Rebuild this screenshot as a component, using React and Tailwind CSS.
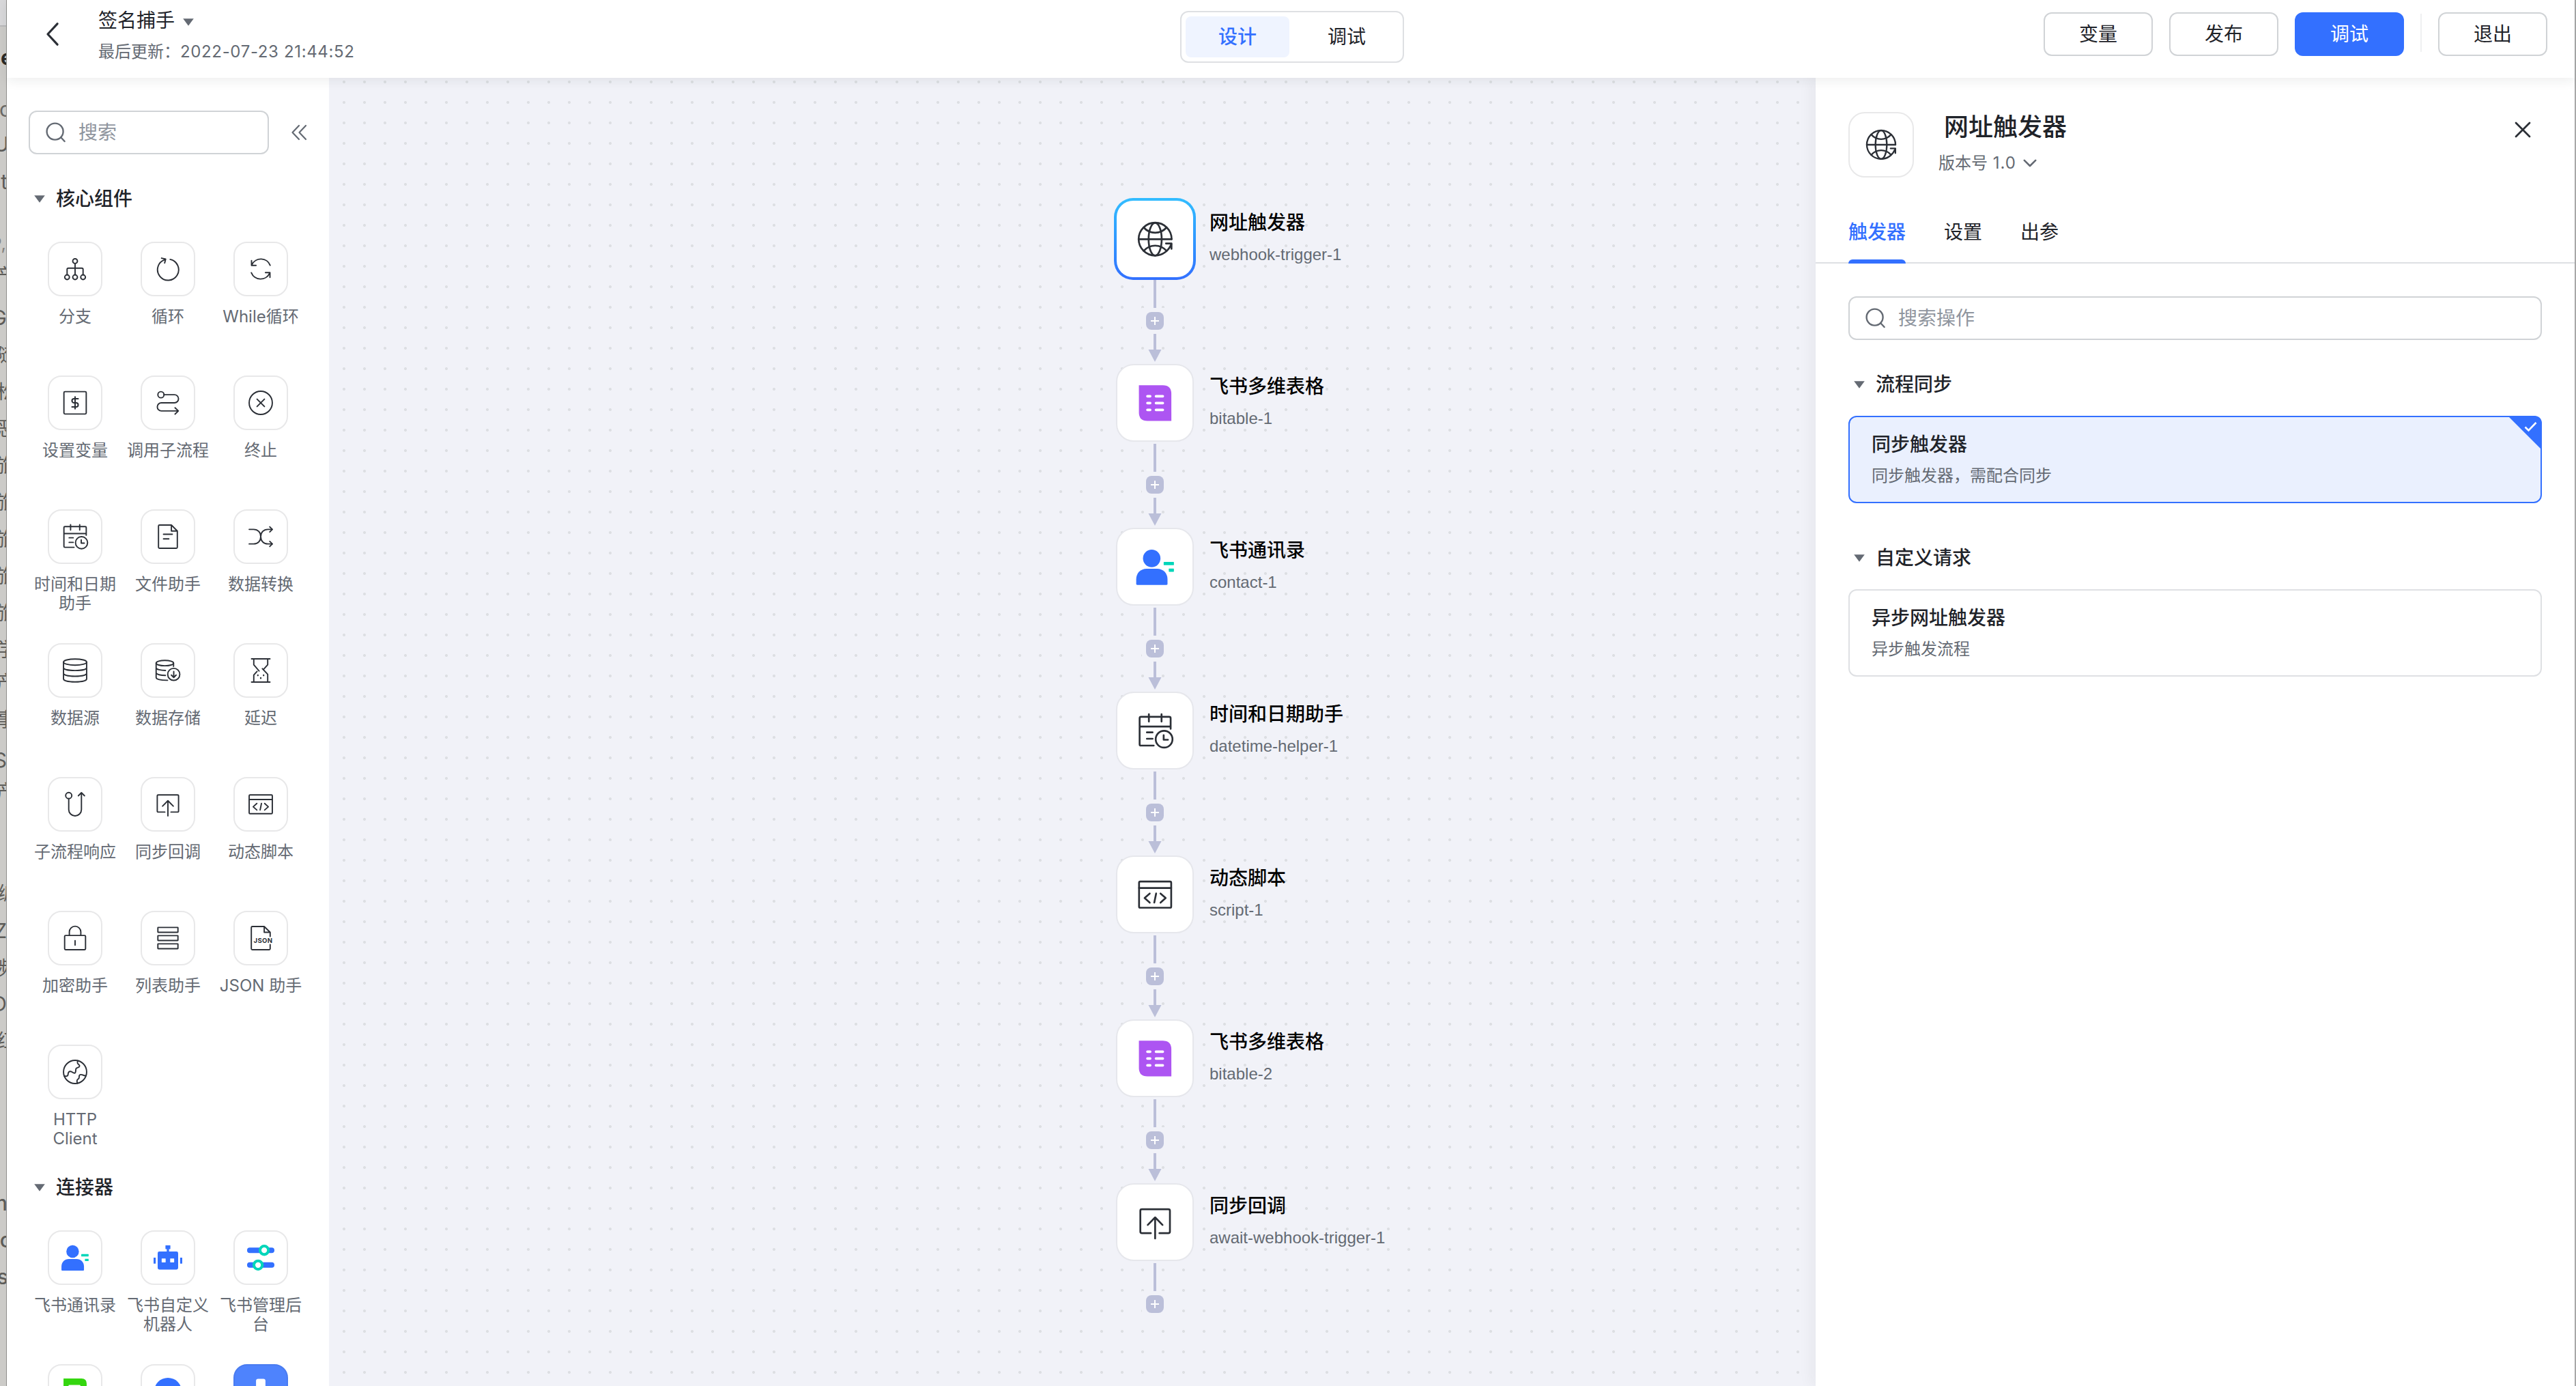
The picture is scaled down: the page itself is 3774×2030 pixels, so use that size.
import React from "react";

const INK = "#2b2f36";

/* Every glyph is drawn around the origin in a 32-unit box. */
function Icon({ size, children }) {
  return (
    <svg
      width={size}
      height={size}
      viewBox="-16 -16 32 32"
      fill="none"
      stroke={INK}
      strokeWidth="1.28"
      strokeLinecap="round"
      strokeLinejoin="round"
      className="block shrink-0"
    >
      {children}
    </svg>
  );
}

const glyphs = {
  branch: (
    <>
      <circle cx="0" cy="-7.7" r="2.3" />
      <circle cx="-7.8" cy="8" r="2.3" />
      <circle cx="0" cy="8" r="2.3" />
      <circle cx="7.8" cy="8" r="2.3" />
      <path d="M0 -5.4V5.7M-7.8 5.7V0.4Q-7.8 -0.8 -6.6 -0.8H6.6Q7.8 -0.8 7.8 0.4V5.7" />
    </>
  ),
  loop: (
    <>
      <path d="M2.2 -9.4A10.3 10.3 0 1 1 -3 -9.1" />
      <path d="M-6.2 -10.6L-2.2 -9.7L-3.2 -5.9" />
    </>
  ),
  whileLoop: (
    <>
      <path d="M-8.6 -4.2A9.7 9.7 0 0 1 9.2 -3.6M-9 -8.2V-3.5H-4.6" />
      <path d="M8.6 4.2A9.7 9.7 0 0 1 -9.2 3.6M9 8.2V3.5H4.6" />
    </>
  ),
  variable: (
    <>
      <rect x="-10.9" y="-10.9" width="21.8" height="21.8" rx="1" />
      <path d="M3 -4H-1A2 2 0 0 0 -1 0H1A2 2 0 0 1 1 4H-3M0 -5.8V5.8" strokeWidth="1.4" />
    </>
  ),
  subflow: (
    <>
      <circle cx="-6.8" cy="-7.9" r="3" />
      <path d="M-3.8 -7.9H6.4A3.95 3.95 0 0 1 6.4 0H-6.4A3.95 3.95 0 0 0 -6.4 7.9H10.2M7 4.8L10.2 7.9L7 11" />
    </>
  ),
  terminate: (
    <>
      <circle cx="0" cy="0" r="11.3" />
      <path d="M-3.6 -3.6L3.6 3.6M3.6 -3.6L-3.6 3.6" />
    </>
  ),
  calendar: (
    <>
      <path d="M10.9 -1.4V-8.8Q10.9 -9.8 9.9 -9.8H-9.9Q-10.9 -9.8 -10.9 -8.8V9.5Q-10.9 10.4 -9.9 10.4H-1M-10.9 -3H10.9" />
      <path d="M-4.4 -11.7V-6.5M4.5 -11.7V-6.5M-5.8 1.1H-1.8M-5.8 5.6H-1.8" />
      <circle cx="6.3" cy="5.9" r="5.9" />
      <path d="M6 3.1V6.3H9" />
    </>
  ),
  file: (
    <>
      <path d="M3.4 -11.3H-8.2Q-9.2 -11.3 -9.2 -10.3V10.3Q-9.2 11.3 -8.2 11.3H8.2Q9.2 11.3 9.2 10.3V-5.5L3.4 -11.3V-5.5H9.2" />
      <path d="M-4.3 -2.3H4.3M-4.3 2.2H0.9" />
    </>
  ),
  shuffle: (
    <>
      <path d="M-11.3 -7.1H-7C-2.6 -7.1 0 -4 0 0S2.6 7.1 7 7.1H11.2" />
      <path d="M-11.3 7.1H-7C-2.6 7.1 0 4 0 0S2.6 -7.1 7 -7.1H11.2" />
      <path d="M8.8 -9.6L11.3 -7.1L8.8 -4.6M8.8 4.6L11.3 7.1L8.8 9.6" />
    </>
  ),
  database: (
    <>
      <ellipse cx="0" cy="-8.2" rx="11.3" ry="3" />
      <path d="M-11.3 -8.2V8.2C-11.3 12.2 11.3 12.2 11.3 8.2V-8.2M-11.3 -2.9C-11.3 1.1 11.3 1.1 11.3 -2.9M-11.3 2.7C-11.3 6.7 11.3 6.7 11.3 2.7" />
    </>
  ),
  dataStore: (
    <>
      <ellipse cx="-3" cy="-7.2" rx="8.5" ry="2.6" />
      <path d="M-11.5 -7.2V6.8C-11.5 8.6 -7 9.7 -0.4 9.6M5.5 -7.2V-4M-11.5 -2.7C-11.5 -1 -7 0 -2.4 0M-11.5 2.2C-11.5 3.9 -7 4.8 -2.4 4.8" />
      <circle cx="5.7" cy="3.8" r="5.9" />
      <path d="M5.7 1V6.6M3.4 4.5L5.7 6.8L8 4.5" />
    </>
  ),
  hourglass: (
    <>
      <path d="M-9 -11.3H9M-9 11.3H9M-6.8 -11.3V-5.6L-1.6 0.5M-3.6 0.9L-6.8 4.4V11.3M6.8 -11.3V-5.6L3.2 -1.6M1.6 -1.8L6.8 3.8V11.3" />
      <path d="M-2.8 4.6V4.9M2.8 4.6V4.9M0 7.3V7.6" strokeWidth="1.5" />
    </>
  ),
  response: (
    <>
      <circle cx="-6.2" cy="-8.5" r="3" />
      <path d="M-6.2 -5.5V5.1A6.2 6.2 0 0 0 6.2 5.1V-11.2M3.2 -8.3L6.2 -11.3L9.2 -8.3" />
    </>
  ),
  callback: (
    <>
      <path d="M-3 7.6H-9.3Q-10.4 7.6 -10.4 6.6V-8.2Q-10.4 -9.2 -9.3 -9.2H9.3Q10.4 -9.2 10.4 -8.2V6.6Q10.4 7.6 9.3 7.6H3" />
      <path d="M0 11.3V-3.4M-5.2 1.8L0 -3.5L5.2 1.8" />
    </>
  ),
  script: (
    <>
      <rect x="-11.3" y="-9.2" width="22.6" height="18.4" rx="0.9" />
      <path d="M-11.3 -4.7H11.3M-3.8 -0.8L-7.4 2.4L-3.8 5.6M3.8 -0.8L7.4 2.4L3.8 5.6M0.7 -0.8L-0.6 5.6" />
    </>
  ),
  lock: (
    <>
      <rect x="-10.2" y="-2.6" width="20.4" height="13.9" rx="0.9" />
      <path d="M-5.6 -2.6V-6A5.6 5.6 0 0 1 5.6 -6V-2.6M0 2.4V6.8" />
    </>
  ),
  list: (
    <>
      <rect x="-9.8" y="-10.4" width="19.6" height="4.7" rx="0.3" />
      <rect x="-9.8" y="-2.4" width="19.6" height="4.7" rx="0.3" />
      <rect x="-9.8" y="5.6" width="19.6" height="4.7" rx="0.3" />
    </>
  ),
  json: (
    <>
      <path d="M9.2 -1.6V-5.7L3.4 -11.3H-8.2Q-9.2 -11.3 -9.2 -10.3V10.3Q-9.2 11.3 -8.2 11.3H8.2Q9.2 11.3 9.2 10.3V6.3M3.4 -11.3V-5.7H9.2" />
      <text
        x="-7"
        y="4.7"
        fontSize="6.4"
        fontWeight="700"
        fontFamily="Inter, 'Liberation Sans', sans-serif"
        textLength="18.4"
        fill={INK}
        stroke="none"
      >
        JSON
      </text>
    </>
  ),
  http: (
    <>
      <circle cx="0" cy="0" r="11.3" />
      <path d="M-10.5 4C-8.5 4.3 -7 4.3 -6.9 2.6C-6.8 0.5 -6.2 -0.6 -4.4 -0.5C-2.8 -0.3 -2 1.4 -0.4 1.2C1.2 0.9 0.2 -1.8 1 -3.3C1.8 -4.6 4.3 -4 4.4 -5.8C4.4 -7.3 2.8 -7.3 2.4 -8.7C2.2 -9.6 2.4 -10.4 2.8 -10.9" />
      <path d="M-3.6 10.7C-4.4 9.2 -4 8 -2.8 7.3" stroke="none" />
      <path d="M2.4 11C1.5 9.4 1.6 7.6 3.2 6.8C4.6 6 3.4 4.4 4.4 3.1C5.4 2 6.8 2.7 7.8 3.1C8.8 3.6 9.6 3.8 10.5 3.6" />
    </>
  ),
  webhook: (
    <>
      <path d="M11.6 0A11.6 11.6 0 1 0 -11.6 0A11.6 11.6 0 0 0 0 11.5C5.6 11.5 9.6 7.8 11.4 3.4" />
      <path d="M-11.6 0H11.6M7.6 3H11.5V6.8M-8 -8.2C-3.6 -3.3 3.6 -3.3 8 -8.2M-8 8.2C-3.6 3.3 3.6 3.3 8 8.2" />
      <ellipse cx="0" cy="0" rx="4.6" ry="11.5" />
    </>
  ),
  contact: (
    <g stroke="none">
      <circle cx="-2.4" cy="-6" r="6.15" fill="#3370ff" />
      <path
        d="M-13.3 8.6C-13.3 4.4 -10.2 1.3 -6 1.3H1.4C5.6 1.3 8.7 4.4 8.7 8.6V12Q8.7 12.7 8 12.7H-12.6Q-13.3 12.7 -13.3 12Z"
        fill="#3370ff"
      />
      <rect x="6" y="-3.5" width="7.2" height="2.3" rx="0.3" fill="#00d6b9" />
      <rect x="9.6" y="1.1" width="3.6" height="2.3" rx="0.3" fill="#00d6b9" />
    </g>
  ),
  robot: (
    <g stroke="none" fill="#3370ff">
      <rect x="-2.4" y="-12" width="4.8" height="3.6" rx="0.3" />
      <rect x="-1.1" y="-8.6" width="2.2" height="3" />
      <rect x="-10" y="-6" width="20" height="17.6" rx="1.6" />
      <rect x="-14" y="0" width="2.1" height="5.8" rx="0.2" />
      <rect x="11.9" y="0" width="2.1" height="5.8" rx="0.2" />
      <rect x="-6.1" y="0.8" width="3.9" height="3.9" rx="0.3" fill="#fff" />
      <rect x="2.2" y="0.8" width="3.9" height="3.9" rx="0.3" fill="#fff" />
    </g>
  ),
  sliders: (
    <>
      <path d="M-10.7 -7.2H10.7M-10.7 7.2H10.7" stroke="#3370ff" strokeWidth="5.3" />
      <circle cx="3.4" cy="-7.2" r="4.1" fill="#fff" stroke="#00d6b9" strokeWidth="2.7" />
      <circle cx="-2.6" cy="7.2" r="4.1" fill="#fff" stroke="#00d6b9" strokeWidth="2.7" />
    </>
  ),
  bitable: (
    <>
      <path d="M-11.4 -12.5H5.4Q11.4 -12.5 11.4 -6.5V12.5H-5.4Q-11.4 12.5 -11.4 6.5Z" fill="#ad55f2" stroke="none" />
      <path d="M-5.4 -4.8H-3.5M0.6 -4.8H5.4M-5.4 0H-3.5M0.6 0H5.4M-5.4 4.8H-3.5M0.6 4.8H5.4" stroke="#fff" strokeWidth="1.8" />
    </>
  ),
  sheet: (
    <g stroke="none">
      <path d="M-11.3 -12.6H6.3Q11.3 -12.6 11.3 -7.6V12.6H-6Q-11.3 12.6 -11.3 7Z" fill="#34d60f" />
      <rect x="-6.4" y="-6.3" width="11.6" height="12.6" rx="0.6" fill="#fff" />
    </g>
  ),
  round: <circle cx="0" cy="0" r="13.4" fill="#3370ff" stroke="none" />,
  solid: <rect x="-4.6" y="-12.4" width="9.2" height="24" rx="2" fill="#fff" stroke="none" />,
};

function Caret({ className = "" }) {
  return (
    <svg width="16" height="11" viewBox="0 0 16 11" className={`block shrink-0 ${className}`}>
      <path d="M0.2 0.2H15.8L8 10.8Z" fill="#646a73" />
    </svg>
  );
}

function SearchIcon() {
  return (
    <svg width="30" height="30" viewBox="0 0 30 30" fill="none" stroke="#646a73" strokeWidth="2.4" strokeLinecap="round" className="block shrink-0">
      <circle cx="13.6" cy="13.6" r="12" />
      <path d="M22.5 22.5L27.6 28" />
    </svg>
  );
}

const core = [
  ["branch", "分支"],
  ["loop", "循环"],
  ["whileLoop", "While循环"],
  ["variable", "设置变量"],
  ["subflow", "调用子流程"],
  ["terminate", "终止"],
  ["calendar", "时间和日期助手"],
  ["file", "文件助手"],
  ["shuffle", "数据转换"],
  ["database", "数据源"],
  ["dataStore", "数据存储"],
  ["hourglass", "延迟"],
  ["response", "子流程响应"],
  ["callback", "同步回调"],
  ["script", "动态脚本"],
  ["lock", "加密助手"],
  ["list", "列表助手"],
  ["json", "JSON 助手"],
  ["http", "HTTP Client"],
];

const connectors = [
  ["contact", "飞书通讯录"],
  ["robot", "飞书自定义机器人"],
  ["sliders", "飞书管理后台"],
  ["sheet", ""],
  ["round", ""],
  ["solid", ""],
];

function Tile({ icon, label }) {
  const filled = icon === "solid";
  return (
    <div className="flex h-[196px] w-[136px] flex-col items-center">
      <div
        className={
          filled
            ? "flex size-20 shrink-0 items-center justify-center rounded-[20px] border-2 border-[#4a7cf0] bg-[#4e83fd]"
            : "flex size-20 shrink-0 items-center justify-center rounded-[20px] border-2 border-[#e8e8e9] bg-white"
        }
      >
        <Icon size={48}>{glyphs[icon]}</Icon>
      </div>
      <div className="mt-4 w-[124px] text-center text-[24px] leading-7 text-[#646a73]">{label}</div>
    </div>
  );
}

function Section({ title, items, className }) {
  return (
    <section className={className}>
      <div className="flex h-10 items-center gap-4 pl-10 text-[28px] font-medium leading-10 text-[#1f2329]">
        <Caret />
        {title}
      </div>
      <div className="mt-[43px] flex flex-wrap pl-8">
        {items.map(([icon, label], i) => (
          <Tile key={i} icon={icon} label={label} />
        ))}
      </div>
    </section>
  );
}

/* [centre y, text, font size, right overhang, tone] */
const behind = [
  [84, "de", 30, -10, "font-bold text-[#2a2926]"],
  [160, "o", 30, -8, "text-[#6a6966]"],
  [211, "U", 30, -4, "text-[#5d5c59]"],
  [266, "t", 30, -2, "text-[#5d5c59]"],
  [357, "P,", 26, 0, "text-[#84837f]"],
  [404, "产", 28, -12, "text-[#5d5c59]"],
  [465, "G", 30, -1, "text-[#5d5c59]"],
  [520, "随", 28, -12, "text-[#5d5c59]"],
  [574, "松", 28, -14, "text-[#5d5c59]"],
  [628, "恶", 28, -14, "text-[#5d5c59]"],
  [682, "旅", 28, -12, "text-[#5d5c59]"],
  [736, "旅", 28, -12, "text-[#5d5c59]"],
  [790, "旅", 28, -12, "text-[#5d5c59]"],
  [844, "旅", 28, -12, "text-[#5d5c59]"],
  [898, "旅", 28, -12, "text-[#5d5c59]"],
  [952, "学", 28, -14, "text-[#5d5c59]"],
  [1000, "产", 28, -14, "text-[#5d5c59]"],
  [1054, "事", 28, -14, "text-[#5d5c59]"],
  [1113, "S", 30, -1, "text-[#5d5c59]"],
  [1160, "产", 28, -14, "text-[#5d5c59]"],
  [1257, ",", 28, 8, "text-[#84837f]"],
  [1309, "编", 28, -16, "text-[#5d5c59]"],
  [1363, "Z", 30, -1, "text-[#5d5c59]"],
  [1418, "频", 28, -16, "text-[#5d5c59]"],
  [1470, "D", 30, -1, "text-[#5d5c59]"],
  [1525, "红", 28, -14, "text-[#5d5c59]"],
  [1616, "E", 24, 8, "text-[#9a9996]"],
  [1762, "m", 30, -2, "font-medium text-[#5d5c59]"],
  [1816, "po", 30, -9, "font-medium text-[#5d5c59]"],
  [1870, "s", 30, -3, "font-medium text-[#5d5c59]"],
];

function BackWindow() {
  return (
    <div className="relative h-full w-[10px] shrink-0 overflow-hidden border-r border-[#8f8e8c] bg-[#cccbc8]">
      <div className="h-[39px] border-b-2 border-[#b9b9bb] bg-[#d8d8da]" />
      {behind.map(([y, text, size, right, tone], i) => (
        <div
          key={i}
          className={`absolute -translate-y-1/2 whitespace-nowrap leading-none ${tone}`}
          style={{ top: y, fontSize: size, right }}
        >
          {text}
        </div>
      ))}
    </div>
  );
}

const nodes = [
  ["webhook", "网址触发器", "webhook-trigger-1"],
  ["bitable", "飞书多维表格", "bitable-1"],
  ["contact", "飞书通讯录", "contact-1"],
  ["calendar", "时间和日期助手", "datetime-helper-1"],
  ["script", "动态脚本", "script-1"],
  ["bitable", "飞书多维表格", "bitable-2"],
  ["callback", "同步回调", "await-webhook-trigger-1"],
];

function Node({ icon, title, id, selected, last }) {
  return (
    <div className="flex h-[240px] gap-5">
      <div className="flex w-[120px] shrink-0 flex-col items-center">
        {selected ? (
          <div className="size-[120px] shrink-0 rounded-[28px] bg-linear-to-b from-[#33bdff] to-[#3370ff] p-1">
            <div className="flex size-full items-center justify-center rounded-[24px] bg-white">
              <Icon size={66.7}>{glyphs[icon]}</Icon>
            </div>
          </div>
        ) : (
          <div className="flex h-[120px] shrink-0 items-center">
            <div className="flex size-[114px] items-center justify-center rounded-[26px] border-2 border-[#e6e7ec] bg-white">
              <Icon size={66.7}>{glyphs[icon]}</Icon>
            </div>
          </div>
        )}
        <div className="h-[41px] w-[4px] shrink-0 bg-[#bbbfd9]" />
        <div className="flex size-[38px] shrink-0 items-center justify-center bg-[#f1f2f8]">
          <svg width="26" height="26" viewBox="0 0 26 26" className="block">
            <rect width="26" height="26" rx="8" fill="#bbbfd9" />
            <path d="M13 7V19M7 13H19" stroke="#fff" strokeWidth="2" />
          </svg>
        </div>
        {!last && (
          <>
            <div className="h-[23px] w-[4px] shrink-0 bg-[#bbbfd9]" />
            <svg width="20" height="18" viewBox="0 0 20 18" className="block shrink-0">
              <path d="M0.5 0H19.5L10 18Z" fill="#bbbfd9" />
            </svg>
          </>
        )}
      </div>
      <div className="flex flex-col pt-4">
        <div className="whitespace-nowrap text-[28px] font-medium leading-10 text-black">{title}</div>
        <div className="mt-[9px] whitespace-nowrap font-['Liberation_Sans','Noto_Sans_CJK_SC',sans-serif] text-[24px] leading-9 text-[#646a73]">
          {id}
        </div>
      </div>
    </div>
  );
}

function Btn({ children, primary }) {
  return (
    <button
      className={
        primary
          ? "h-16 w-40 rounded-xl bg-[#3370ff] text-[28px] leading-none text-white"
          : "h-16 w-40 rounded-xl border-2 border-[#d0d3d6] bg-white text-[28px] leading-none text-[#1f2329]"
      }
    >
      {children}
    </button>
  );
}

function Header() {
  return (
    <header className="relative z-10 grid h-[114px] shrink-0 grid-cols-[1719px_328px_1fr] items-start bg-white shadow-[0_4px_16px_rgba(31,35,41,0.08)]">
      <div className="flex pl-[58px]">
        <svg width="18" height="34" viewBox="0 0 18 34" fill="none" stroke={INK} strokeWidth="3.2" strokeLinecap="round" strokeLinejoin="round" className="mt-[33px] block">
          <path d="M16 1.8L2 17L16 32.2" />
        </svg>
        <div className="ml-[58px] flex flex-col">
          <div className="mt-[10px] flex h-10 items-center gap-[12px] text-[28px] leading-10 text-[#1f2329]">
            签名捕手
            <Caret className="mt-[5px]" />
          </div>
          <div className="mt-2 whitespace-nowrap text-[24px] leading-9 text-[#646a73]">
            最后更新：<span className="tracking-[0.65px]">2022-07-23 21:44:52</span>
          </div>
        </div>
      </div>
      <div className="mt-4 flex h-[76px] gap-2 rounded-xl border-2 border-[#dee0e3] p-[6px] text-[28px] leading-[60px]">
        <div className="w-[152px] rounded-lg bg-[#eff4ff] text-center font-medium text-[#3370ff]">设计</div>
        <div className="w-[152px] text-center text-[#1f2329]">调试</div>
      </div>
      <div className="mt-[18px] flex justify-end gap-6 pr-10">
        <Btn>变量</Btn>
        <Btn>发布</Btn>
        <Btn primary>调试</Btn>
        <div className="mt-[2px] h-14 w-[2px] bg-[#eff0f1]" />
        <Btn>退出</Btn>
      </div>
    </header>
  );
}

function Sidebar() {
  return (
    <aside className="h-full w-[472px] shrink-0 overflow-hidden bg-white">
      <div className="mt-12 flex items-center pl-8">
        <div className="flex h-16 w-[352px] items-center gap-[18px] rounded-xl border-2 border-[#d0d3d6] pl-[23px] text-[28px] leading-10 text-[#8f959e]">
          <SearchIcon />
          搜索
        </div>
        <svg width="24" height="24" viewBox="0 0 24 24" fill="none" stroke="#646a73" strokeWidth="2.2" strokeLinecap="round" strokeLinejoin="round" className="ml-8 block">
          <path d="M12 2L2.5 12L12 22M22 2L12.5 12L22 22" />
        </svg>
      </div>
      <Section title="核心组件" items={core} className="mt-[45px]" />
      <Section title="连接器" items={connectors} className="-mt-[7px]" />
    </aside>
  );
}

function Group({ title, children, className }) {
  return (
    <div className={className}>
      <div className="flex h-10 items-center gap-4 pl-2 text-[28px] font-medium leading-10 text-[#1f2329]">
        <Caret />
        {title}
      </div>
      {children}
    </div>
  );
}

function Panel() {
  return (
    <aside className="relative h-full w-[1112px] shrink-0 bg-white shadow-[-6px_0_20px_rgba(31,35,41,0.05)]">
      <div className="flex h-[188px] pl-12 pt-[50px]">
        <div className="flex size-24 shrink-0 items-center justify-center rounded-[24px] border-2 border-[#e8e8e9]">
          <Icon size={58}>{glyphs.webhook}</Icon>
        </div>
        <div className="ml-9 flex flex-1 flex-col">
          <div className="-mt-1 pl-2 text-[36px] font-medium leading-[52px] text-[#1f2329]">网址触发器</div>
          <div className="mt-[9px] flex items-center gap-[10px] text-[24px] leading-9 text-[#646a73]">
            <span>
              版本号<span className="tracking-[1px]"> 1.0</span>
            </span>
            <svg width="20" height="12" viewBox="0 0 20 12" fill="none" stroke="#646a73" strokeWidth="2.6" strokeLinecap="round" strokeLinejoin="round" className="block">
              <path d="M1.8 1.8L10 10L18.2 1.8" />
            </svg>
          </div>
        </div>
        <svg width="24" height="24" viewBox="0 0 24 24" fill="none" stroke={INK} strokeWidth="2.8" strokeLinecap="round" className="mr-16 mt-[14px] block">
          <path d="M2 2L22 22M22 2L2 22" />
        </svg>
      </div>
      <nav className="flex h-[84px] gap-14 border-b-2 border-[#dee0e3] pl-12 text-[28px] leading-10 text-[#1f2329]">
        <div className="flex h-[84px] flex-col justify-between pt-[18px] font-medium text-[#3370ff]">
          触发器
          <div className="h-[6px] rounded-t-md bg-[#3370ff]" />
        </div>
        <div className="pt-[18px]">设置</div>
        <div className="pt-[18px]">出参</div>
      </nav>
      <div className="px-12 pt-12">
        <div className="flex h-16 items-center gap-[18px] rounded-xl border-2 border-[#d0d3d6] pl-[23px] text-[28px] leading-10 text-[#8f959e]">
          <SearchIcon />
          搜索操作
        </div>
        <Group title="流程同步" className="mt-[45px]">
          <div className="relative mt-[26px] h-32 rounded-xl border-2 border-[#3370ff] bg-[#eaf0fe] px-8 pt-[20px]">
            <div className="text-[28px] font-medium leading-10 text-[#1f2329]">同步触发器</div>
            <div className="mt-2 text-[24px] leading-9 text-[#646a73]">同步触发器，需配合同步</div>
            <svg width="50" height="50" viewBox="0 0 50 50" className="absolute -right-[2px] -top-[2px] block">
              <path d="M0 0H38Q50 0 50 12V50Z" fill="#3370ff" />
              <path d="M25.5 16.5L30.5 21.5L41.5 10" fill="none" stroke="#fff" strokeWidth="2.6" />
            </svg>
          </div>
        </Group>
        <Group title="自定义请求" className="mt-[60px]">
          <div className="mt-[26px] h-32 rounded-xl border-2 border-[#dee0e3] bg-white px-8 pt-[20px]">
            <div className="text-[28px] font-medium leading-10 text-[#1f2329]">异步网址触发器</div>
            <div className="mt-2 text-[24px] leading-9 text-[#646a73]">异步触发流程</div>
          </div>
        </Group>
      </div>
    </aside>
  );
}

export default function App() {
  return (
    <div className="flex h-[2030px] w-[3774px] overflow-hidden bg-white font-['Inter','Noto_Sans_CJK_SC',sans-serif]">
      <BackWindow />
      <div className="flex h-full w-[3762px] shrink-0 flex-col">
        <Header />
        <div className="flex min-h-0 flex-1">
          <Sidebar />
          <main className="h-full flex-1 overflow-hidden bg-[#f1f2f8] bg-[radial-gradient(circle_at_15px_15px,#dddfe3_1.6px,transparent_2.4px)] bg-[length:30px_30px] bg-[position:7px_-9px] pl-[1150px] pt-[176px]">
            {nodes.map(([icon, title, id], i) => (
              <Node key={i} icon={icon} title={title} id={id} selected={i === 0} last={i === nodes.length - 1} />
            ))}
          </main>
          <Panel />
        </div>
      </div>
      <div className="h-full w-[2px] shrink-0 bg-[#a9a9a9]" />
    </div>
  );
}
